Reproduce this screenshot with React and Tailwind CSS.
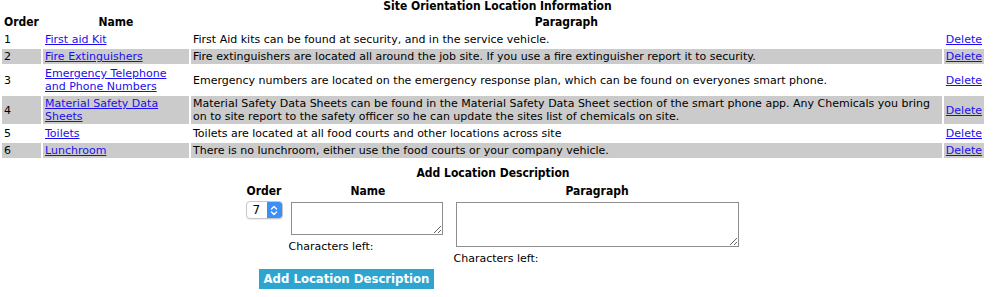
import React from 'react';

const rows = [
  { order: 1, name: ['First aid Kit'], text: ['First Aid kits can be found at security, and in the service vehicle.'] },
  { order: 2, name: ['Fire Extinguishers'], text: ['Fire extinguishers are located all around the job site. If you use a fire extinguisher report it to security.'] },
  { order: 3, name: ['Emergency Telephone', 'and Phone Numbers'], text: ['Emergency numbers are located on the emergency response plan, which can be found on everyones smart phone.'] },
  {
    order: 4,
    name: ['Material Safety Data', 'Sheets'],
    text: [
      'Material Safety Data Sheets can be found in the Material Safety Data Sheet section of the smart phone app. Any Chemicals you bring',
      'on to site report to the safety officer so he can update the sites list of chemicals on site.',
    ],
  },
  { order: 5, name: ['Toilets'], text: ['Toilets are located at all food courts and other locations across site'] },
  { order: 6, name: ['Lunchroom'], text: ['There is no lunchroom, either use the food courts or your company vehicle.'] },
];

const bold = "font-bold text-[12px] font-['DejaVu_Sans_Condensed','DejaVu_Sans',sans-serif] font-stretch-condensed";

function Lines({ lines }) {
  return lines.map((l, j) => (
    <React.Fragment key={j}>
      {j > 0 && <br />}
      {l}
    </React.Fragment>
  ));
}

export default function App() {
  const cell = 'px-[2px] py-[1px] align-middle leading-[13px] whitespace-nowrap';
  return (
    <div className="w-[994px] h-[297px] overflow-hidden bg-white text-black text-[11px] leading-[13px] font-['DejaVu_Sans',sans-serif]">
      <table className="w-[986px] -mt-[3px] border-separate border-spacing-[2px]">
        <tbody>
          <tr>
            <td colSpan={4} className={`${bold} text-center p-0 pl-[9px] leading-[14px]`}>
              Site Orientation Location Information
            </td>
          </tr>
          <tr className={bold}>
            <td className="w-[39px] px-[2px] py-[1px] text-left leading-[13px]">Order</td>
            <td className="w-[146px] px-[2px] py-[1px] text-center leading-[13px]">Name</td>
            <td className="px-[2px] py-[1px] text-center leading-[13px]">Paragraph</td>
            <td className="w-[38px] px-[2px] py-[1px]"></td>
          </tr>
          {rows.map((r, i) => {
            const bg = i % 2 === 1 ? 'bg-[#cbcbcb]' : '';
            return (
              <tr key={r.order}>
                <td className={`${bg} ${cell}`}>{r.order}</td>
                <td className={`${bg} ${cell}`}>
                  <a href="#" className="text-[#1a0dee] underline">
                    <Lines lines={r.name} />
                  </a>
                </td>
                <td className={`${bg} ${cell}`}>
                  <Lines lines={r.text} />
                </td>
                <td className={`${bg} ${cell}`}>
                  <a href="#" className="text-[#1a0dee] underline">Delete</a>
                </td>
              </tr>
            );
          })}
        </tbody>
      </table>

      <div className={`w-[986px] mt-[7px] text-center leading-[13px] ${bold}`}>Add Location Description</div>

      <div className="w-[986px] flex justify-center">
        <table className="mt-[2px] border-separate border-spacing-[2px]">
          <tbody>
            <tr className={bold}>
              <td className="px-[2px] py-[1px] text-center leading-[13px]">Order</td>
              <td className="px-[2px] py-[1px] text-center leading-[13px]">Name</td>
              <td className="px-[2px] py-[1px] text-center leading-[13px]">Paragraph</td>
            </tr>
            <tr>
              <td className="px-[2px] py-0 align-top">
                <div className="flex h-[18px] w-[37px] rounded-[4px] border border-[#c6c6c6] bg-white shadow-[0_1px_1px_rgba(0,0,0,0.08)] overflow-hidden">
                  <span className="flex-1 pl-[6px] leading-[16px] text-[12px]">7</span>
                  <span className="flex w-[15px] items-center justify-center bg-[#3d8ff6]">
                    <svg width="8" height="11" viewBox="0 0 8 11" fill="none" stroke="white" strokeWidth="1.4" strokeLinecap="round" strokeLinejoin="round">
                      <path d="M1.5 4 L4 1.5 L6.5 4" />
                      <path d="M1.5 7 L4 9.5 L6.5 7" />
                    </svg>
                  </span>
                </div>
              </td>
              <td className="px-[2px] py-0 align-top">
                <textarea className="block mt-[1px] ml-[2px] mr-[5px] w-[152px] h-[33px] border border-[#8d8d8d] bg-white resize-y" />
                <div className="mt-[5px] leading-[13px]">Characters left:</div>
              </td>
              <td className="px-[2px] py-0 align-top">
                <textarea className="block mt-[1px] ml-[2px] mr-[2px] w-[283px] h-[45px] border border-[#8d8d8d] bg-white resize-y" />
                <div className="mt-[5px] leading-[13px]">Characters left:</div>
              </td>
            </tr>
            <tr>
              <td colSpan={2} className="text-center pt-[2px] px-[2px] pb-0">
                <button className="h-[20px] w-[175px] bg-[#2da5d0] text-[13px] leading-[20px] font-bold text-white font-['DejaVu_Sans_Condensed','DejaVu_Sans',sans-serif] font-stretch-condensed">
                  Add Location Description
                </button>
              </td>
              <td></td>
            </tr>
          </tbody>
        </table>
      </div>
    </div>
  );
}
